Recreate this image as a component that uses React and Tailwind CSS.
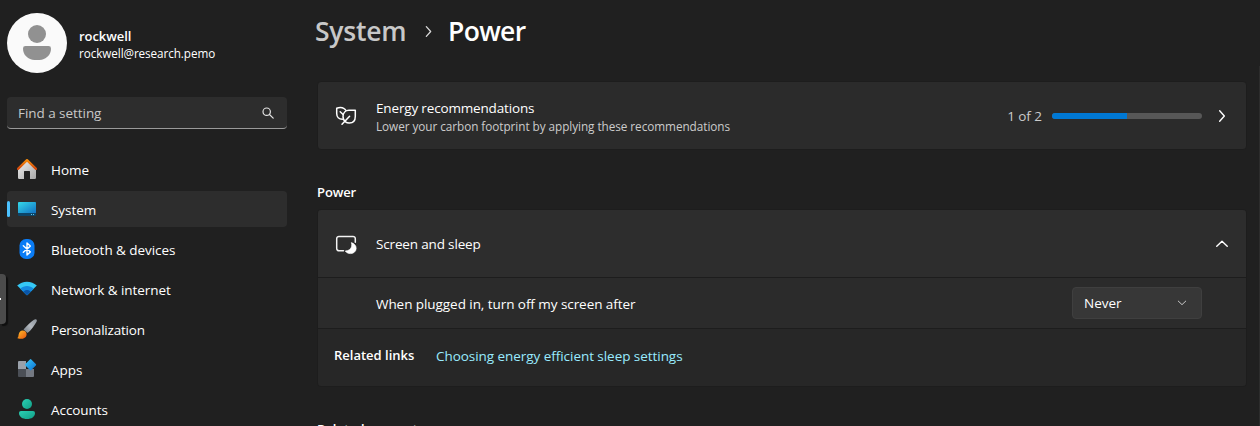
function HomeIcon() {
  return (
    <svg className="size-5" viewBox="0 0 20 20">
      <defs>
        <linearGradient id="homeWall" x1="0" y1="0" x2="1" y2="1">
          <stop offset="0" stopColor="#efefef" />
          <stop offset="1" stopColor="#a8a8a8" />
        </linearGradient>
        <linearGradient id="homeRoof" x1="0" y1="0" x2="0" y2="1">
          <stop offset="0" stopColor="#f58a0b" />
          <stop offset="1" stopColor="#d2470c" />
        </linearGradient>
      </defs>
      <path d="M1 10 10 1.8 19 10v8.8a1.2 1.2 0 0 1-1.2 1.2H13v-7.5a.6.6 0 0 0-.6-.6H7.6a.6.6 0 0 0-.6.6V20H2.2A1.2 1.2 0 0 1 1 18.8z" fill="url(#homeWall)" />
      <path d="M1 9.9 10 1.2l9 8.7" fill="none" stroke="url(#homeRoof)" strokeWidth="2.3" strokeLinecap="round" strokeLinejoin="round" />
    </svg>
  );
}

function SystemIcon() {
  return (
    <svg className="size-5" viewBox="0 0 20 20">
      <defs>
        <linearGradient id="screen" x1="0" y1="0" x2="1" y2="1">
          <stop offset="0" stopColor="#35d9e8" />
          <stop offset="1" stopColor="#1272c4" />
        </linearGradient>
      </defs>
      <rect x="1" y="3" width="18" height="14" rx="1" fill="#0d4467" />
      <path d="M1 4a1 1 0 0 1 1-1h16a1 1 0 0 1 1 1v10H1z" fill="url(#screen)" />
      <path d="M14 15h1v1h-1zM16 15h1v1h-1z" fill="#5cc9f5" />
    </svg>
  );
}

function BluetoothIcon() {
  return (
    <svg className="size-5" viewBox="0 0 20 20">
      <rect x="2.5" y="0" width="15" height="20" rx="6.5" fill="#0a7cf5" />
      <path d="M6.3 6.8 13.3 12.9 10 16V4l3.3 3.1-7 6.1" fill="none" stroke="#fff" strokeWidth="1.4" strokeLinejoin="round" strokeLinecap="round" />
    </svg>
  );
}

function NetworkIcon() {
  return (
    <svg className="size-5" viewBox="0 0 20 20">
      <path d="M.2 6.5C5.5 1.4 14.5 1.4 19.8 6.5L10.7 15.8a1 1 0 0 1-1.4 0z" fill="#35c8f5" />
      <path d="M3.3 9.7c3.7-3.6 9.7-3.6 13.4 0l-6 6.1a1 1 0 0 1-1.4 0z" fill="#1489df" />
      <path d="M6.2 12.6c2.100-2.100 5.500-2.100 7.600 0l-3.100 3.200a1 1 0 0 1-1.400 0z" fill="#0a55a8" />
    </svg>
  );
}

function BrushIcon() {
  return (
    <svg className="size-5" viewBox="0 0 20 20">
      <defs>
        <linearGradient id="handle" x1="1" y1="0" x2="0" y2="1">
          <stop offset="0" stopColor="#8c949c" />
          <stop offset=".5" stopColor="#b4bac0" />
          <stop offset="1" stopColor="#717a83" />
        </linearGradient>
        <linearGradient id="bristle" x1="0" y1="0" x2="1" y2="1">
          <stop offset="0" stopColor="#ffc02c" />
          <stop offset="1" stopColor="#e8540c" />
        </linearGradient>
      </defs>
      <path d="M19.4.5c.7.7.5 1.5 0 2.4-1.7 3.2-5 7.6-8.8 11.2L6.5 10.6C10.3 6.3 14 2.700 17 .7c.9-.6 1.800-.8 2.400-.2z" fill="url(#handle)" />
      <path d="M5.6 11.5c2.3 0 4.100 1.700 4 3.900-.2 3-3.300 4.600-6.300 4.400-1.300 0-2.600-.3-3.100-.8 1.400-.5 1.100-2 1.500-3.700.5-2.300 1.900-3.800 3.900-3.800z" fill="url(#bristle)" />
    </svg>
  );
}

function AppsIcon() {
  return (
    <svg className="size-5" viewBox="0 0 20 20">
      <defs>
        <linearGradient id="diamond" x1="0" y1="0" x2="1" y2="1">
          <stop offset="0" stopColor="#3bc8fa" />
          <stop offset="1" stopColor="#0a72d2" />
        </linearGradient>
      </defs>
      <path d="M1 3a1 1 0 0 1 1-1h7v8H1z" fill="#9aa1aa" />
      <path d="M1 10h8v8H2a1 1 0 0 1-1-1z" fill="#4b4f56" />
      <path d="M9 10h8v7a1 1 0 0 1-1 1H9z" fill="#747982" />
      <path d="M12.9.4a1 1 0 0 1 1.4 0l4.5 4.6a1 1 0 0 1 0 1.4l-4.5 4.5a1 1 0 0 1-1.4 0L8.4 6.4a1 1 0 0 1 0-1.4z" fill="url(#diamond)" />
    </svg>
  );
}

function AccountsIcon() {
  return (
    <svg className="size-5" viewBox="0 0 20 20">
      <defs>
        <linearGradient id="person" x1="0" y1="0" x2="1" y2="1">
          <stop offset="0" stopColor="#2bd0b4" />
          <stop offset="1" stopColor="#109e85" />
        </linearGradient>
      </defs>
      <circle cx="10" cy="5" r="5" fill="url(#person)" />
      <path d="M4 12h12a2 2 0 0 1 2 2c0 3.9-3.5 6-8 6s-8-2.1-8-6a2 2 0 0 1 2-2z" fill="url(#person)" />
    </svg>
  );
}

function LeafIcon() {
  return (
    <svg className="size-6" viewBox="0 0 24 24" fill="none" stroke="#fff" strokeWidth="1.5" strokeLinecap="round" strokeLinejoin="round">
      <path d="M8.4 15.300C5 15.300 2.700 13 2.700 9.600V4.300c2.200-1 5.600-.9 7.400.3.700.4 1.200 1 1.600 1.600" />
      <path d="M6.2 7.7 8.8 10.200" />
      <path d="M11.5 17.900C9.800 16.700 9 14.800 9 12.600 9 8.600 11.600 6.200 15 6.200h6.300v6.100c0 4.400-2.600 6.800-6 6.800-1.500 0-2.800-.4-3.800-1.200z" />
      <path d="M15.600 12.200 8 20.300" />
    </svg>
  );
}

function ScreenSleepIcon() {
  return (
    <svg className="size-6" viewBox="0 0 24 24" fill="none">
      <path d="M9.500 18.800H5a2.300 2.300 0 0 1-2.300-2.300V6.700A2.300 2.300 0 0 1 5 4.400h14a2.300 2.300 0 0 1 2.300 2.300v3.500" stroke="#f4f4f4" strokeWidth="1.5" strokeLinecap="round" />
      <path d="M17.300 10.600c2.900.8 4.900 3 4.900 5.700 0 3.100-2.600 5.300-5.600 5.300-2.300 0-4.300-1-5.400-2.600 3.700-.2 6-2.100 6.400-4.800.2-1.200.1-2.400-.3-3.600z" fill="#fff" stroke="#fff" strokeWidth=".6" strokeLinejoin="round" />
    </svg>
  );
}

function Chevron({ className, d }) {
  return (
    <svg className={className} viewBox="0 0 12 12" fill="none" stroke="currentColor" strokeWidth="1.2" strokeLinecap="round" strokeLinejoin="round">
      <path d={d} />
    </svg>
  );
}

const NAV = [
  { label: 'Home', icon: HomeIcon },
  { label: 'System', icon: SystemIcon, active: true },
  { label: 'Bluetooth & devices', icon: BluetoothIcon },
  { label: 'Network & internet', icon: NetworkIcon },
  { label: 'Personalization', icon: BrushIcon, tracking: 'tracking-[-0.2px]' },
  { label: 'Apps', icon: AppsIcon },
  { label: 'Accounts', icon: AccountsIcon },
];

function NavItem({ label, icon: Icon, active, tracking = 'tracking-[-0.06px]' }) {
  return (
    <a className={active ? 'flex h-9 items-center rounded bg-[#2d2d2d]' : 'flex h-9 items-center rounded'}>
      <span className={active ? 'h-4 w-[3px] rounded-full bg-[#4cc2ff]' : 'h-4 w-[3px]'} />
      <span className="ml-[7px] flex"><Icon /></span>
      <span className={`ml-3.5 pt-0.5 ${tracking}`}>{label}</span>
    </a>
  );
}

function Sidebar() {
  return (
    <aside className="w-[280px] shrink-0">
      <div className="flex h-[60px] items-center">
        <div className="flex size-[60px] flex-col items-center rounded-full bg-[#fafafa] pt-3">
          <div className="size-[18px] rounded-full bg-[#919191]" />
          <div className="mt-[3px] h-[14px] w-7 rounded-t-[3px] rounded-b-[14px] bg-[#919191]" />
        </div>
        <div className="ml-3 pt-0.5">
          <div className="text-[13px] leading-[18px] font-semibold tracking-[-0.05px]">rockwell</div>
          <div className="text-[11.7px] leading-4 tracking-[-0.07px]">rockwell@research.pemo</div>
        </div>
      </div>
      <div className="mt-6 flex h-8 items-center justify-between rounded border-b border-[#9a9a9a] bg-[#2d2d2d] pr-3 pl-[11px] text-[#c8c8c8]">
        <span className="tracking-[-0.05px]">Find a setting</span>
        <svg className="size-[14px]" viewBox="0 0 14 14" fill="none" stroke="#e4e4e4" strokeWidth="1.2" strokeLinecap="round">
          <circle cx="5.7" cy="5.7" r="3.7" />
          <path d="m8.5 8.5 3.700 3.700" />
        </svg>
      </div>
      <nav className="mt-[22px] flex flex-col gap-1">
        {NAV.map((item) => (
          <NavItem key={item.label} {...item} />
        ))}
      </nav>
    </aside>
  );
}

function EnergyCard() {
  return (
    <section className="mt-8 flex h-[69px] items-center rounded border border-[#1d1d1d] bg-[#2b2b2b] px-4">
      <LeafIcon />
      <div className="ml-[18px] flex-1 pt-0.5">
        <div className="leading-[19px] tracking-[-0.16px]">Energy recommendations</div>
        <div className="text-[11.75px] leading-[17px] tracking-[-0.05px] text-[#cccccc]">Lower your carbon footprint by applying these recommendations</div>
      </div>
      <span className="tracking-[-0.05px] text-[#cccccc]">1 of 2</span>
      <div className="ml-2.5 h-1.5 w-[150px] overflow-hidden rounded-full bg-[#575757]">
        <div className="h-full w-1/2 bg-[#0078d4]" />
      </div>
      <Chevron className="mr-px ml-[13px] size-[14px]" d="M4 1.5 8 6l-4 4.5" />
    </section>
  );
}

function SleepCard() {
  return (
    <section className="mt-[7px] overflow-hidden rounded border border-[#1d1d1d]">
      <div className="flex h-[67px] items-center bg-[#2d2d2d] px-4">
        <ScreenSleepIcon />
        <span className="ml-[18px] flex-1 tracking-[-0.16px]">Screen and sleep</span>
        <Chevron className="mr-px size-[14px]" d="M1.5 8 6 3.7 10.5 8" />
      </div>
      <div className="flex h-[52px] items-center justify-between border-y border-[#1d1d1d] bg-[#2b2b2b] pr-11 pl-[58px]">
        <span className="pt-0.5 tracking-[-0.06px]">When plugged in, turn off my screen after</span>
        <button className="flex h-8 w-[130px] items-center justify-between rounded border border-[#3f3f3f] bg-[#373737] pr-3.5 pl-[11px]">
          <span>Never</span>
          <Chevron className="size-[10px] text-[#c8c8c8]" d="M1.5 3.7 6 8l4.5-4.3" />
        </button>
      </div>
      <div className="flex h-[57px] items-center bg-[#272727] pl-4">
        <span className="w-[102px] pb-[5px] text-[13px] font-semibold">Related links</span>
        <a className="pb-[3px] text-[#99ebff] tracking-[-0.05px]">Choosing energy efficient sleep settings</a>
      </div>
    </section>
  );
}

export default function App() {
  return (
    <div className="relative flex h-[426px] w-[1260px] overflow-hidden bg-[#202020] pt-[13px] pl-[7px] font-['Open_Sans','Noto_Sans',sans-serif] text-[13.5px] leading-5 whitespace-nowrap text-white">
      <Sidebar />
      <main className="ml-[30px] w-[930px]">
        <h1 className="flex h-9 items-center text-[26.5px] leading-9 font-semibold">
          <span className="-ml-0.5 w-[92px] tracking-[-0.25px] text-[#c8c8c8]">System</span>
          <Chevron className="mr-[13px] ml-[15px] size-[13px] text-[#d8d8d8]" d="M4 1.5 8 6l-4 4.5" />
          <span className="tracking-[-0.65px]">Power</span>
        </h1>
        <EnergyCard />
        <h2 className="mt-8 text-[13px] font-semibold tracking-[-0.1px]">Power</h2>
        <SleepCard />
        <h2 className="mt-8 text-[13px] font-semibold">Related support</h2>
      </main>
      <div className="absolute top-[274px] left-0 flex h-[50px] w-1.5 items-center rounded-r bg-[#4b4b4b] shadow-[2px_2px_1px_#0f0f0f]">
        <span className="h-0.5 w-px bg-white" />
      </div>
      <div className="absolute top-[66px] right-0 h-[360px] w-px bg-[#2c2c2c]" />
    </div>
  );
}
